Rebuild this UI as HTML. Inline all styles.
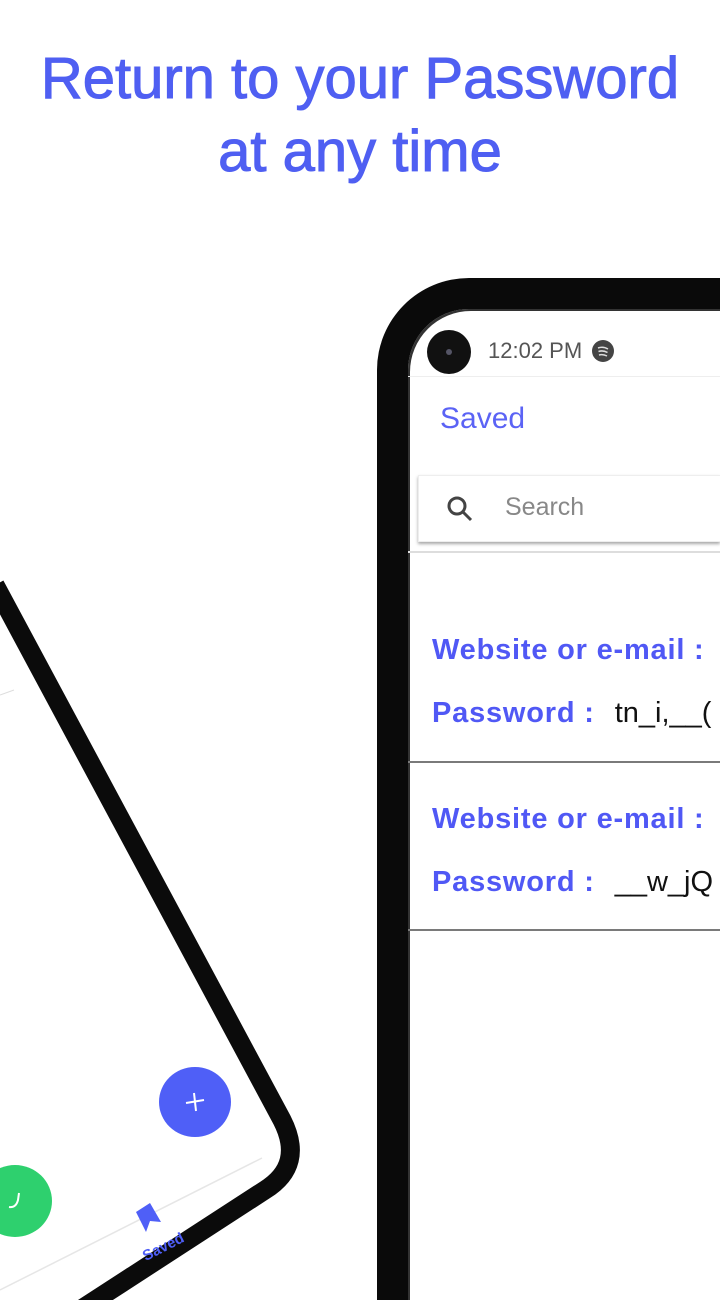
<!DOCTYPE html>
<html><head><meta charset="utf-8"><style>
*{margin:0;padding:0;box-sizing:border-box}
html,body{width:720px;height:1300px;overflow:hidden;background:#fff}
body{font-family:"Liberation Sans",sans-serif}
#w{position:relative;width:720px;height:1300px;overflow:hidden}
h1{position:absolute;left:0;width:720px;top:42px;text-align:center;color:#4f5ff2;font-size:58px;font-weight:normal;line-height:73px;-webkit-text-stroke:1px #4f5ff2}
.ph{position:absolute;left:377px;top:278px;width:343px;height:1022px;border:31px solid #0a0a0a;border-right:none;border-bottom:none;border-radius:92px 0 0 0;box-shadow:inset 2px 2px 0 0 #333}
.a{position:absolute}
.lab{position:absolute;left:432px;font-weight:bold;font-size:29px;letter-spacing:0.8px;color:#5058f5;white-space:nowrap}
.val{font-weight:normal;color:#111;margin-left:20px;letter-spacing:0}
.hr{position:absolute;left:408px;width:312px;height:2px;background:#7a7a7a}
</style></head><body><div id="w">
<h1>Return to your Password<br>at any time</h1>

<svg class="a" style="left:0;top:0" width="720" height="1300">
  <path d="M-5 585 L282 1120 Q305 1165 265 1190 L80 1310" fill="none" stroke="#0b0b0b" stroke-width="19"/>
  <line x1="0" y1="695" x2="14" y2="690" stroke="#ddd" stroke-width="1"/>
  <line x1="0" y1="1290" x2="262" y2="1158" stroke="#e6e6e6" stroke-width="1.5"/>
  <ellipse cx="195" cy="1102" rx="36" ry="35" fill="#4f5ff7"/>
  <path d="M186 1103 L204 1100 M194 1093 L196 1111" stroke="#fff" stroke-width="2"/>
  <ellipse cx="15" cy="1201" rx="37" ry="36" fill="#2ed06e"/>
  <path d="M9 1207 Q16 1208 18 1200 L19 1193" stroke="#fff" stroke-width="2" fill="none"/>
  <path d="M136 1212 L150 1203 L161 1222 L150 1221 L146 1232 Z" fill="#4f5ff7"/>
  <text x="140" y="1253" font-size="15" font-weight="bold" fill="#4f5ff7" font-family="Liberation Sans" transform="rotate(-27 160 1245)">Saved</text>
</svg>

<div class="ph"></div>
<div class="a" style="left:427px;top:330px;width:44px;height:44px;border-radius:50%;background:#111"></div>
<div class="a" style="left:446px;top:349px;width:6px;height:6px;border-radius:50%;background:#556"></div>
<div class="a" style="left:488px;top:338px;font-size:22px;color:#555">12:02 PM</div>
<div class="a" style="left:592px;top:340px;width:22px;height:22px;border-radius:50%;background:#444"></div>
<svg class="a" style="left:592px;top:340px" width="22" height="22"><path d="M6 8 Q11 6 16 9 M6.5 11.5 Q11 10 15.5 12.5 M7 15 Q11 14 15 16" stroke="#ddd" stroke-width="1.5" fill="none"/></svg>
<div class="a" style="left:408px;top:376px;width:312px;height:1px;background:#eee"></div>
<div class="a" style="left:440px;top:402px;font-size:30px;color:#5b63f5">Saved</div>
<div class="a" style="left:418px;top:475px;width:302px;height:67px;background:#fff;box-shadow:0 2px 3px rgba(0,0,0,.35);border:1px solid #eee;border-right:none"></div>
<svg class="a" style="left:444px;top:494px" width="32" height="32"><circle cx="13" cy="12" r="8" fill="none" stroke="#444" stroke-width="3"/><line x1="19" y1="18" x2="27" y2="26" stroke="#444" stroke-width="3"/></svg>
<div class="a" style="left:505px;top:493px;font-size:25px;color:#888">Search</div>
<div class="a" style="left:408px;top:551px;width:312px;height:2px;background:#ddd"></div>

<div class="lab" style="top:634px">Website or e-mail :</div>
<div class="lab" style="top:697px">Password :<span class="val">tn_i,__(</span></div>
<div class="hr" style="top:761px"></div>
<div class="lab" style="top:803px">Website or e-mail :</div>
<div class="lab" style="top:866px">Password :<span class="val">__w_jQ</span></div>
<div class="hr" style="top:929px"></div>
</div></body></html>
